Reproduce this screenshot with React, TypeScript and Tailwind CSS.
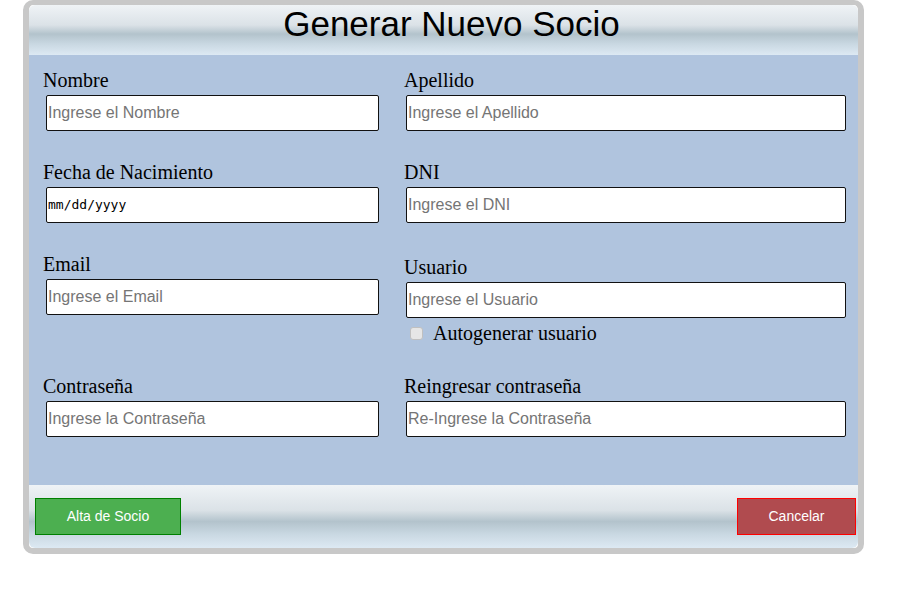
import React from "react";

const glossy =
  "bg-[linear-gradient(to_bottom,#eff3f6_0%,#dbe2e7_40%,#b3c3cc_58%,#c9d8e2_78%,#dde9f3_100%)]";

const serif = "font-['Liberation_Serif','Times_New_Roman',serif]";
const sans = "font-['Liberation_Sans',Arial,sans-serif]";

type FieldProps = {
  label: string;
  placeholder: string;
  width: string;
};

function Field({ label, placeholder, width }: FieldProps) {
  return (
    <div className="flex flex-col">
      <label className={`${serif} text-[20px] leading-[23px] text-black`}>{label}</label>
      <input
        type="text"
        placeholder={placeholder}
        className={`${sans} ${width} ml-[3px] mt-[3px] h-9 rounded-[2px] border border-[#111] bg-white px-[1px] text-[16px] text-black outline-none placeholder:text-[#757575]`}
      />
    </div>
  );
}

export default function App() {
  return (
    <div className="w-full min-h-dvh bg-white">
      <div className="ml-[23px] w-[841px] rounded-[10px] border-[6px] border-t-[5px] border-[#c8c8c8]">
        <div className="overflow-hidden rounded-[6px]">
          {/* cabecera */}
          <div className={`${glossy} flex h-[50px] items-start justify-center pl-4`}>
            <h1 className={`${sans} text-[35px] leading-[38px] text-black`}>Generar Nuevo Socio</h1>
          </div>

          {/* formulario */}
          <div className="bg-[#b0c4de] pl-[14px] pt-[14px] pb-[48px]">
            <div className="flex gap-[14px]">
              <div className="w-[347px]">
                <Field label="Nombre" placeholder="Ingrese el Nombre" width="w-[333px]" />
              </div>
              <Field label="Apellido" placeholder="Ingrese el Apellido" width="w-[440px] !ml-[2px]" />
            </div>

            <div className="mt-[30px] flex gap-[14px]">
              <div className="w-[347px]">
                <div className="flex flex-col">
                  <label className={`${serif} text-[20px] leading-[23px] text-black`}>Fecha de Nacimiento</label>
                  <div className="ml-[3px] mt-[3px] flex h-9 w-[333px] items-center rounded-[2px] border border-[#111] bg-white px-[1px] font-['DejaVu_Sans_Mono',monospace] text-[13px] text-black">
                    mm/dd/yyyy
                  </div>
                </div>
              </div>
              <Field label="DNI" placeholder="Ingrese el DNI" width="w-[440px] !ml-[2px]" />
            </div>

            <div className="mt-[30px] flex gap-[14px]">
              <div className="w-[347px]">
                <Field label="Email" placeholder="Ingrese el Email" width="w-[333px]" />
              </div>
              <div className="pt-[3px]">
                <Field label="Usuario" placeholder="Ingrese el Usuario" width="w-[440px] !ml-[2px]" />
                <div className="mt-[4px] flex items-center">
                  <span className="ml-[6px] mr-[10px] block h-[13px] w-[13px] rounded-[3px] border border-[#c0c0c0] bg-[#e6e6e6]" />
                  <span className={`${serif} text-[20px] leading-[23px] text-black`}>Autogenerar usuario</span>
                </div>
              </div>
            </div>

            <div className="mt-[30px] flex gap-[14px]">
              <div className="w-[347px]">
                <Field label="Contraseña" placeholder="Ingrese la Contraseña" width="w-[333px]" />
              </div>
              <Field label="Reingresar contraseña" placeholder="Re-Ingrese la Contraseña" width="w-[440px] !ml-[2px]" />
            </div>
          </div>

          {/* botones */}
          <div className={`${glossy} flex h-[63px] items-start justify-between pl-[6px] pr-[2px] pt-[13px]`}>
            <button className={`${sans} h-[37px] w-[146px] border border-[#008000] bg-[#4caf50] text-[14px] text-white`}>
              Alta de Socio
            </button>
            <button className={`${sans} h-[37px] w-[119px] border border-[#ff0000] bg-[#b04b4f] text-[14px] text-white`}>
              Cancelar
            </button>
          </div>
        </div>
      </div>
    </div>
  );
}
